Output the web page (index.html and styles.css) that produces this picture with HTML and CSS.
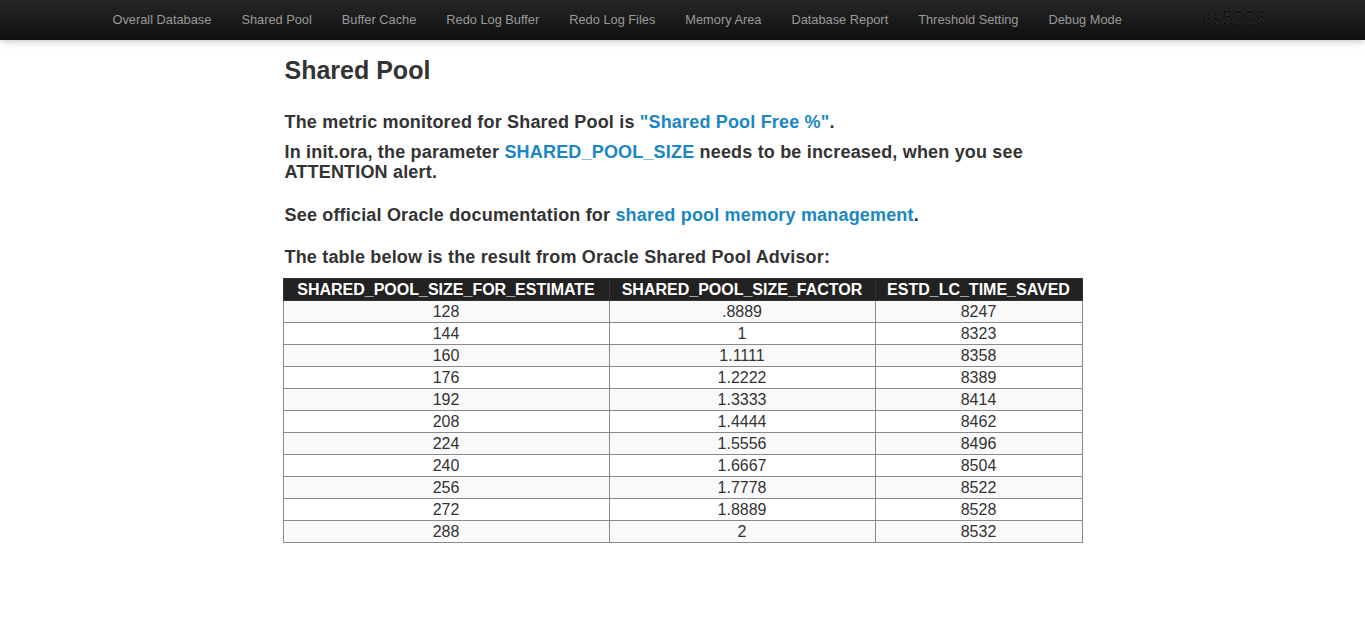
FILE: index.html
```html
<!DOCTYPE html>
<html>
<head>
<meta charset="utf-8">
<title>Shared Pool</title>
<link rel="stylesheet" href="styles.css">
</head>
<body>
<div class="navbar">
  <div class="nav-inner">
    <ul class="nav">
      <li><a href="#">Overall Database</a></li>
      <li><a href="#">Shared Pool</a></li>
      <li><a href="#">Buffer Cache</a></li>
      <li><a href="#">Redo Log Buffer</a></li>
      <li><a href="#">Redo Log Files</a></li>
      <li><a href="#">Memory Area</a></li>
      <li><a href="#">Database Report</a></li>
      <li><a href="#">Threshold Setting</a></li>
      <li><a href="#">Debug Mode</a></li>
    </ul>
    <span class="brand">cs5226</span>
  </div>
</div>
<div class="container">
  <h2 class="title">Shared Pool</h2>
  <p class="p1">The metric monitored for Shared Pool is <a href="#">"Shared Pool Free %"</a>.</p>
  <p class="p2">In init.ora, the parameter <a href="#">SHARED_POOL_SIZE</a> needs to be increased, when you see ATTENTION alert.</p>
  <p class="p3">See official Oracle documentation for <a href="#">shared pool memory management</a>.</p>
  <p class="p4">The table below is the result from Oracle Shared Pool Advisor:</p>
  <table class="advisor">
    <colgroup><col class="c1"><col class="c2"><col class="c3"></colgroup>
    <thead>
      <tr><th>SHARED_POOL_SIZE_FOR_ESTIMATE</th><th>SHARED_POOL_SIZE_FACTOR</th><th>ESTD_LC_TIME_SAVED</th></tr>
    </thead>
    <tbody>
      <tr><td>128</td><td>.8889</td><td>8247</td></tr>
      <tr><td>144</td><td>1</td><td>8323</td></tr>
      <tr><td>160</td><td>1.1111</td><td>8358</td></tr>
      <tr><td>176</td><td>1.2222</td><td>8389</td></tr>
      <tr><td>192</td><td>1.3333</td><td>8414</td></tr>
      <tr><td>208</td><td>1.4444</td><td>8462</td></tr>
      <tr><td>224</td><td>1.5556</td><td>8496</td></tr>
      <tr><td>240</td><td>1.6667</td><td>8504</td></tr>
      <tr><td>256</td><td>1.7778</td><td>8522</td></tr>
      <tr><td>272</td><td>1.8889</td><td>8528</td></tr>
      <tr><td>288</td><td>2</td><td>8532</td></tr>
    </tbody>
  </table>
</div>
</body>
</html>
```
FILE: styles.css
```css
html, body {
  margin: 0;
  padding: 0;
  background: #fff;
  font-family: "Liberation Sans", Arial, sans-serif;
  color: #333;
}
.navbar {
  height: 40px;
  background: linear-gradient(to bottom, #262626, #0f0f0f);
  box-shadow: 0 1px 8px rgba(0,0,0,0.25);
}
.nav-inner {
  width: 1140px;
  margin: 0 auto;
  display: flex;
  align-items: center;
  height: 40px;
}
.nav {
  list-style: none;
  margin: 0;
  padding: 0;
  display: flex;
  gap: 30px;
  flex-shrink: 0;
}
.nav li {
  white-space: nowrap;
}
.nav a {
  color: #999;
  text-decoration: none;
  font-size: 12.8px;
  line-height: 40px;
}
.brand {
  margin-left: 80px;
  font-size: 20px;
  color: #0e0e0e;
  text-shadow: 0 0 1px #555;
  line-height: 40px;
  position: relative;
  top: -2px;
  white-space: nowrap;
}
.container {
  width: 800px;
  margin: 0 auto;
  padding-left: 2px;
  box-sizing: border-box;
}
.title {
  font-size: 25px;
  line-height: 30px;
  font-weight: bold;
  margin: 15px 0 0;
}
.container p {
  font-size: 18px;
  font-weight: bold;
  line-height: 20px;
  letter-spacing: 0.18px;
  margin: 0;
}
.container p a {
  color: #1a87c5;
  text-decoration: none;
}
.p1 { margin-top: 27px !important; }
.p2 { margin-top: 10px !important; }
.p3 { margin-top: 23px !important; }
.p4 { margin-top: 22px !important; }
.advisor {
  margin-top: 11px;
  margin-left: -2px;
  border-collapse: collapse;
  width: 799px;
  table-layout: fixed;
  border: 1px solid #333;
}
.c1 { width: 326px; }
.c2 { width: 266px; }
.c3 { width: 207px; }
.advisor th {
  background: #222;
  color: #fff;
  font-size: 16px;
  font-weight: bold;
  height: 21px;
  padding: 0;
  line-height: 20px;
  border: 1px solid #333;
  white-space: nowrap;
}
.advisor td {
  font-size: 16px;
  text-align: center;
  height: 21px;
  padding: 0;
  line-height: 20px;
  border: 1px solid #8a8a8a;
  color: #333;
}
.advisor tbody tr:nth-child(odd) td {
  background: #f9f9f9;
}
```
